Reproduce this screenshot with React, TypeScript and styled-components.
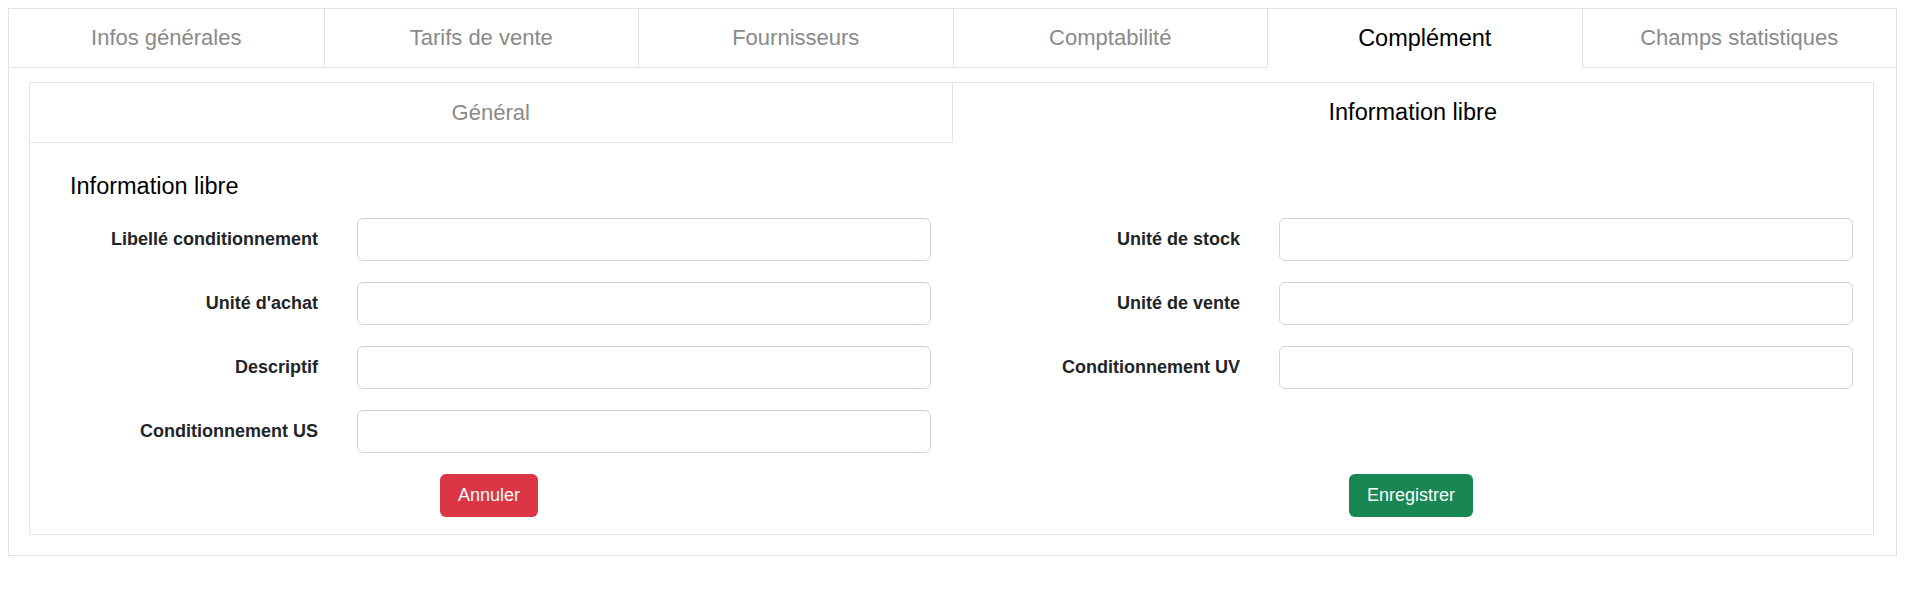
import React from "react";
import styled, { createGlobalStyle } from "styled-components";

const GlobalStyle = createGlobalStyle`
  body {
    margin: 8px;
    background: #ffffff;
    font-family: "Liberation Sans", Arial, sans-serif;
    color: #212529;
  }
  * {
    box-sizing: border-box;
  }
`;

const BORDER = "#e3e3e3";

const Panel = styled.div`
  margin-right: 15px;
  border: 1px solid ${BORDER};
  background: #ffffff;
`;

const TabBar = styled.div<{ $count: number }>`
  display: grid;
  grid-template-columns: repeat(${(p) => p.$count}, 1fr);
`;

const Tab = styled.div<{ $active?: boolean; $first?: boolean; $height: number }>`
  height: ${(p) => p.$height}px;
  display: flex;
  align-items: center;
  justify-content: center;
  font-size: ${(p) => (p.$active ? "23.5px" : "22px")};
  color: ${(p) => (p.$active ? "#000000" : "#8a8a8a")};
  border-left: ${(p) => (p.$first ? "none" : `1px solid ${BORDER}`)};
  border-bottom: 1px solid ${(p) => (p.$active ? "transparent" : BORDER)};
  cursor: pointer;
`;

const PanelBody = styled.div`
  padding: 14px 22px 20px 20px;
`;

const SubPanel = styled.div`
  border: 1px solid ${BORDER};
`;

const Content = styled.div`
  padding: 30px 20px 17px 17px;
`;

const Heading = styled.h3`
  margin: 0 0 18px 23px;
  font-size: 23.5px;
  font-weight: 400;
  line-height: 27px;
  color: #000000;
`;

const FormGrid = styled.div`
  display: grid;
  grid-template-columns: 1fr 1fr;
  column-gap: 38px;
  row-gap: 21px;
`;

const FieldColumn = styled.div`
  display: flex;
  flex-direction: column;
  gap: 21px;
`;

const Field = styled.div`
  display: grid;
  grid-template-columns: 271px 1fr;
  column-gap: 39px;
  align-items: center;
`;

const Label = styled.label`
  text-align: right;
  font-size: 18px;
  font-weight: 700;
  color: #212529;
`;

const Input = styled.input.attrs({ type: "text" })`
  height: 43px;
  width: 100%;
  border: 1px solid #ced4da;
  border-radius: 6px;
  padding: 0 14px;
  font-family: inherit;
  font-size: 18px;
  outline: none;
`;

const ActionCell = styled.div`
  display: flex;
  justify-content: center;
`;

const Button = styled.button<{ $variant: "danger" | "success" }>`
  height: 43px;
  padding: 0 17.5px;
  border: none;
  border-radius: 6px;
  font-family: inherit;
  font-size: 18px;
  color: #ffffff;
  background: ${(p) => (p.$variant === "danger" ? "#dc3545" : "#198754")};
  cursor: pointer;
`;

const mainTabs = [
  "Infos générales",
  "Tarifs de vente",
  "Fournisseurs",
  "Comptabilité",
  "Complément",
  "Champs statistiques",
];

const subTabs = ["Général", "Information libre"];

const leftFields = [
  "Libellé conditionnement",
  "Unité d'achat",
  "Descriptif",
  "Conditionnement US",
];

const rightFields = ["Unité de stock", "Unité de vente", "Conditionnement UV"];

const App: React.FC = () => {
  return (
    <>
      <GlobalStyle />
      <Panel>
        <TabBar $count={mainTabs.length}>
          {mainTabs.map((tab, index) => (
            <Tab
              key={tab}
              $height={59}
              $first={index === 0}
              $active={tab === "Complément"}
            >
              {tab}
            </Tab>
          ))}
        </TabBar>
        <PanelBody>
          <SubPanel>
            <TabBar $count={subTabs.length}>
              {subTabs.map((tab, index) => (
                <Tab
                  key={tab}
                  $height={60}
                  $first={index === 0}
                  $active={tab === "Information libre"}
                >
                  {tab}
                </Tab>
              ))}
            </TabBar>
            <Content>
              <Heading>Information libre</Heading>
              <FormGrid>
                <FieldColumn>
                  {leftFields.map((label) => (
                    <Field key={label}>
                      <Label>{label}</Label>
                      <Input />
                    </Field>
                  ))}
                </FieldColumn>
                <FieldColumn>
                  {rightFields.map((label) => (
                    <Field key={label}>
                      <Label>{label}</Label>
                      <Input />
                    </Field>
                  ))}
                </FieldColumn>
                <ActionCell>
                  <Button $variant="danger">Annuler</Button>
                </ActionCell>
                <ActionCell>
                  <Button $variant="success">Enregistrer</Button>
                </ActionCell>
              </FormGrid>
            </Content>
          </SubPanel>
        </PanelBody>
      </Panel>
    </>
  );
};

export default App;
